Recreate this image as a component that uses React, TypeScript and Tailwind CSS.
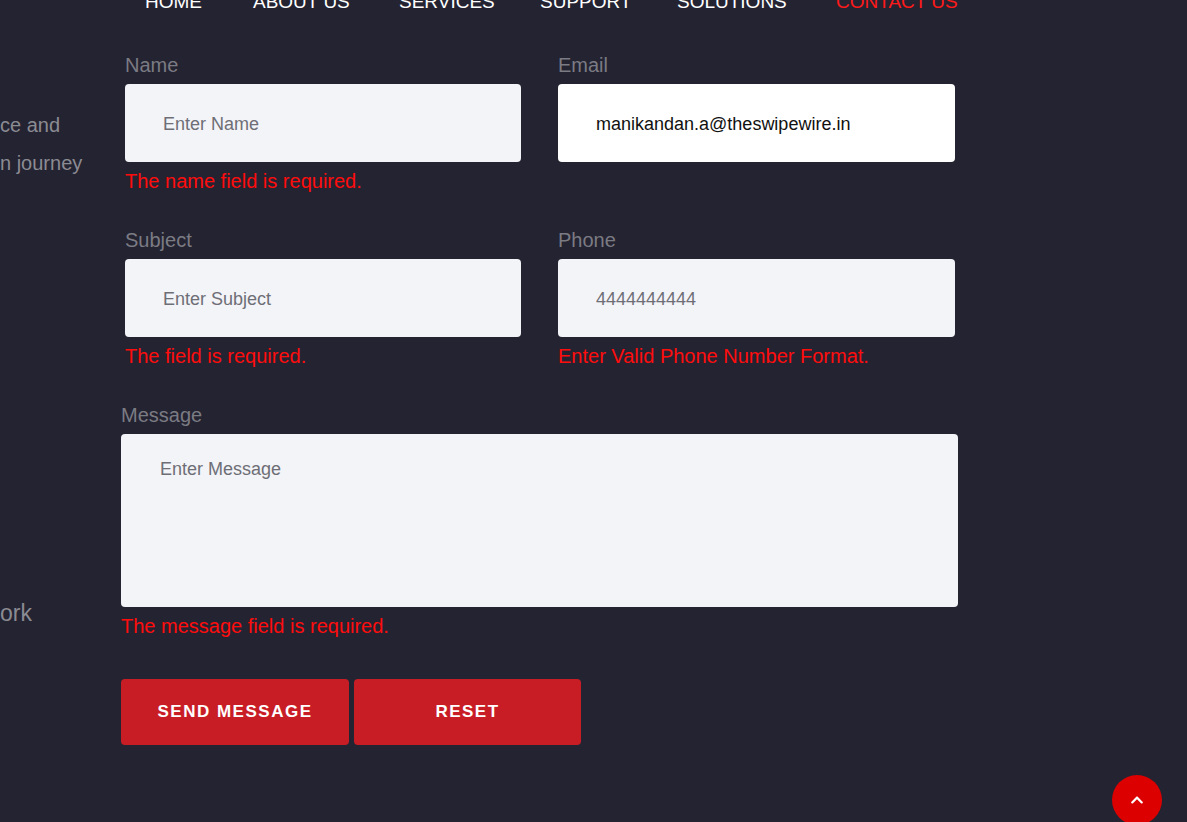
import { FaChevronUp } from "react-icons/fa";

const navItems = [
  { label: "HOME", w: "w-[57px]" },
  { label: "ABOUT US", w: "w-[95px]" },
  { label: "SERVICES", w: "w-[90px]" },
  { label: "SUPPORT", w: "w-[86px]" },
  { label: "SOLUTIONS", w: "w-[108px]" },
  { label: "CONTACT US", w: "w-[122px]" },
];

const Field = ({
  label,
  placeholder,
  value,
  error,
  white,
  muted,
}: {
  label: string;
  placeholder: string;
  value?: string;
  error?: string;
  white?: boolean;
  muted?: boolean;
}) => (
  <div className="flex flex-col">
    <label className="text-[20px] leading-[26px] text-[#7b7b83] mb-[6px]">{label}</label>
    <input
      readOnly
      placeholder={placeholder}
      value={value ?? ""}
      className={`h-[78px] w-full rounded-[4px] px-[38px] pt-[3px] text-[18px] outline-none placeholder:text-[#6e6e76] ${
        muted ? "text-[#6e6e76]" : "text-[#111]"
      } ${white ? "bg-white" : "bg-[#f3f4f8]"}`}
    />
    <div className="h-[65px] pt-[6px] text-[20px] leading-[26px] text-[#ff0d0d]">{error}</div>
  </div>
);

const App = () => {
  return (
    <div className="min-h-[822px] w-full overflow-hidden bg-[#242331] font-['Liberation_Sans',Arial,sans-serif] relative">
      <nav className="flex gap-[51px] pl-[145px] -mt-[12px] h-[28px] text-[19px] font-medium leading-[28px] text-white whitespace-nowrap">
        {navItems.map((n) => (
          <span key={n.label} className={`${n.w} ${n.label === "CONTACT US" ? "text-[#ff1a1a]" : ""}`}>
            {n.label}
          </span>
        ))}
      </nav>

      <div className="flex mt-[36px]">
        <div className="w-[121px] shrink-0 overflow-hidden text-[#8b8b93] whitespace-nowrap">
          <div className="pt-[54px] text-[20px] leading-[38px]">
            <div>ce and</div>
            <div>n journey</div>
          </div>
          <div className="pt-[416px] text-[23px] leading-[30px]">ork</div>
        </div>

        <div className="w-[837px] flex flex-col">
          <div className="ml-[4px] w-[830px] grid grid-cols-[396px_397px] gap-x-[37px]">
            <Field label="Name" placeholder="Enter Name" error="The name field is required." />
            <Field label="Email" placeholder="Enter Email" value="manikandan.a@theswipewire.in" white />
            <Field label="Subject" placeholder="Enter Subject" error="The field is required." />
            <Field label="Phone" placeholder="Enter Phone" value="4444444444" error="Enter Valid Phone Number Format." muted />
          </div>

          <div className="flex flex-col">
            <label className="text-[20px] leading-[26px] text-[#7b7b83] mb-[6px]">Message</label>
            <textarea
              readOnly
              placeholder="Enter Message"
              className="h-[173px] w-full resize-none rounded-[4px] bg-[#f3f4f8] px-[39px] pt-[22px] text-[18px] outline-none placeholder:text-[#6e6e76]"
            />
            <div className="pt-[6px] text-[20px] leading-[26px] text-[#ff0d0d]">The message field is required.</div>
          </div>

          <div className="flex gap-[5px] mt-[40px]">
            <button className="h-[66px] w-[228px] rounded-[4px] bg-[#c91d26] text-[17px] font-bold tracking-[1.5px] text-white">
              SEND MESSAGE
            </button>
            <button className="h-[66px] w-[227px] rounded-[4px] bg-[#c91d26] text-[17px] font-bold tracking-[1.5px] text-white">
              RESET
            </button>
          </div>
        </div>
      </div>

      <button className="absolute left-[1112px] top-[775px] flex h-[50px] w-[50px] items-center justify-center rounded-full bg-[#dc0000] text-white">
        <FaChevronUp size={14} />
      </button>
    </div>
  );
};

export default App;
